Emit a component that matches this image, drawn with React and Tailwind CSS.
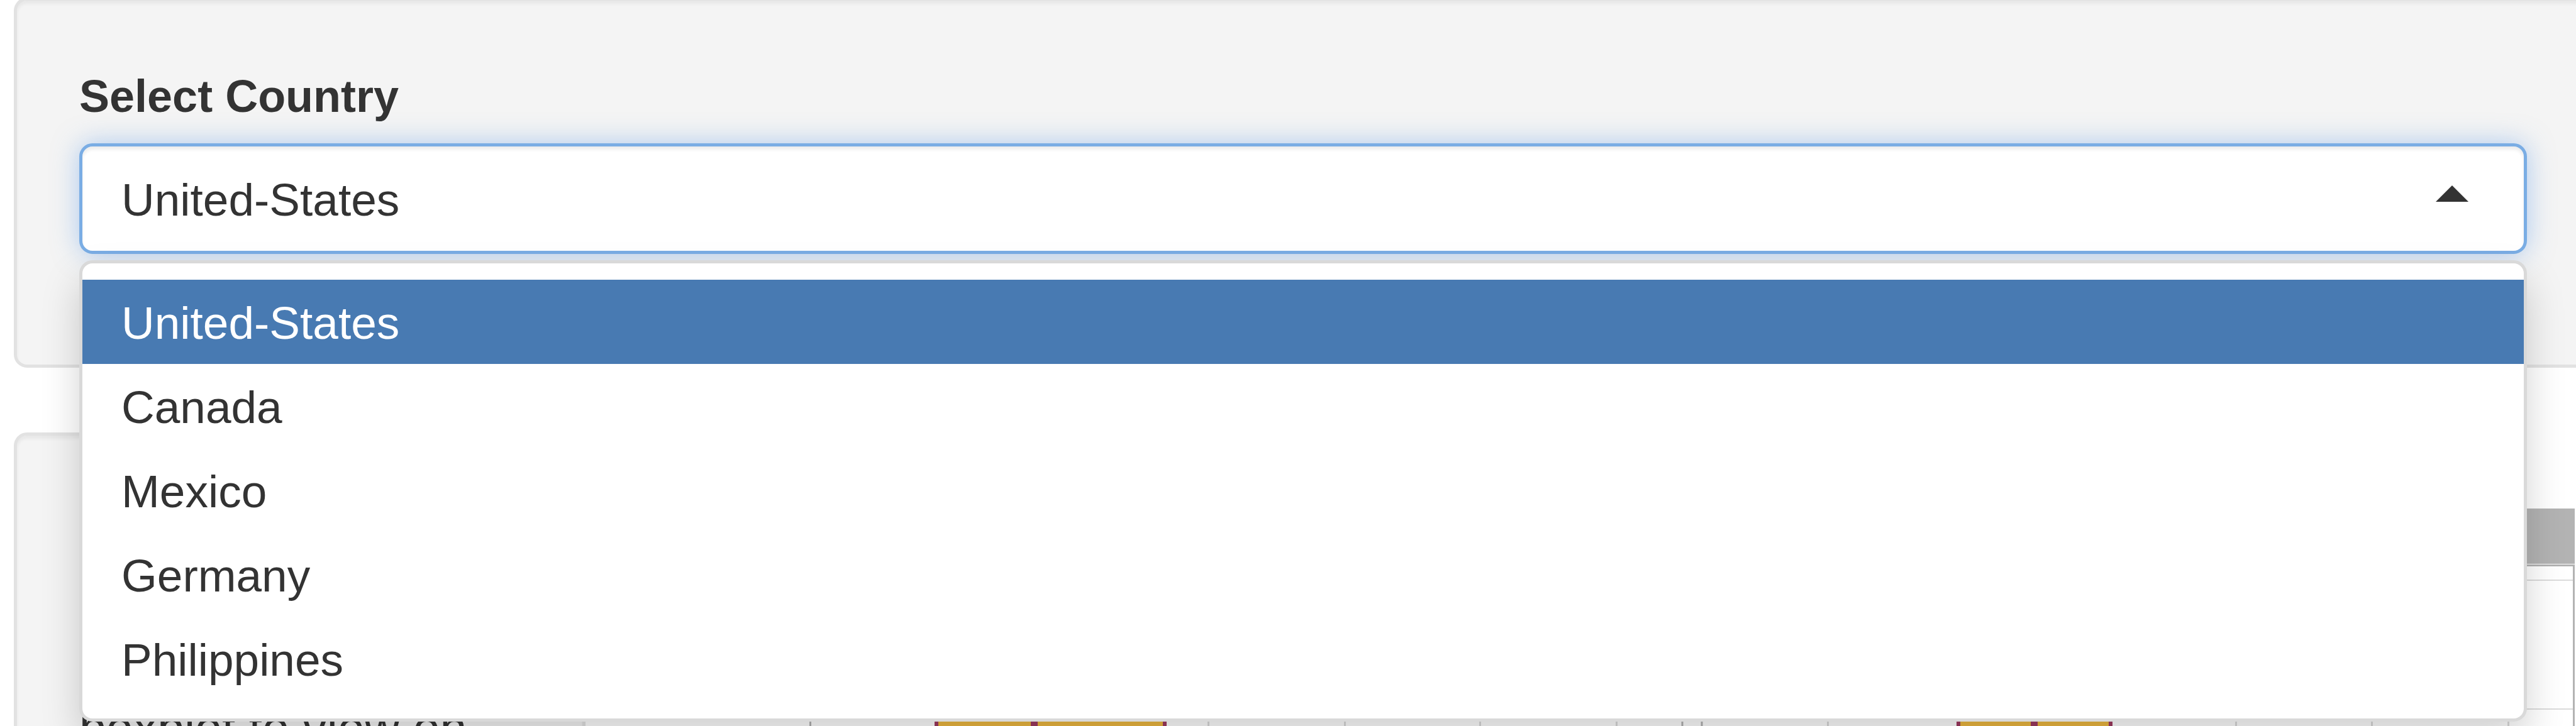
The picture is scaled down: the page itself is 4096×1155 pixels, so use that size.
import React, { useState } from "react";

const countries = ["United-States", "Canada", "Mexico", "Germany", "Philippines"];

function SelectCountry() {
  const [country, setCountry] = useState(countries[0]);
  return (
    <section className="-mr-[26px] -mt-1 rounded-[21px] border-[5px] border-[#e2e2e2] bg-[#f4f4f4] px-[99px] pb-[176px] pt-[101px] shadow-[inset_0_5px_5px_rgba(0,0,0,0.05)]">
      <label htmlFor="country" className="mb-[23px] block text-[72px] font-bold leading-[103px]">
        Select Country
      </label>
      <div className="relative">
        <select
          id="country"
          value={country}
          onChange={(e) => setCountry(e.target.value)}
          className="block h-[176px] w-full appearance-none rounded-[21px] border-[5px] border-[#7aade4] bg-white px-[62px] pt-[3px] text-[73px] leading-[104px] shadow-[inset_0_5px_5px_rgba(0,0,0,0.075),0_0_41px_rgba(102,160,233,0.5)] outline-none"
        >
          {countries.map((name) => (
            <option key={name}>{name}</option>
          ))}
        </select>
        <svg
          aria-hidden="true"
          viewBox="0 0 52 26"
          className="pointer-events-none absolute right-[93px] top-[67px] h-[26px] w-[52px] fill-[#333]"
        >
          <path d="M0 26 26 0l26 26z" />
        </svg>
        <ul
          role="listbox"
          aria-label="Select Country"
          className="absolute inset-x-0 top-full z-10 mt-[10px] rounded-[21px] border-[5px] border-[#d9d9d9] bg-white pb-[28px] pt-[26px] text-[73px] leading-[130px] shadow-[0_31px_62px_rgba(0,0,0,0.175)]"
        >
          {countries.map((name) => (
            <li
              key={name}
              role="option"
              aria-selected={name === country}
              onClick={() => setCountry(name)}
              className="cursor-pointer px-[62px] pt-1 aria-selected:bg-[#487ab2] aria-selected:text-white"
            >
              {name}
            </li>
          ))}
        </ul>
      </div>
    </section>
  );
}

const minorLines = [633, 850, 1065, 1282, 1618, 2267, 2483, 2700];
const rowLines = [113, 318];
const boxes = [
  { left: 202, median: 358, right: 565 },
  { left: 1827, median: 1948, right: 2069 },
];

function BoxPlot() {
  return (
    <svg
      role="img"
      aria-label="Boxplots of the selected country"
      viewBox="0 0 2807 360"
      className="mr-[2px] mt-[121px] h-[360px] w-[2807px] shrink-0"
    >
      <rect x="1417" width="1390" height="88" fill="#b3b3b3" />
      <rect width="1390" height="88" fill="#b3b3b3" />
      <g fill="#dbdbdb">
        {rowLines.map((y) => (
          <rect key={y} y={y} width="2805" height="2" />
        ))}
        {minorLines.map((x) => (
          <rect key={x} x={x} y="90" width="3" height="270" />
        ))}
      </g>
      {boxes.map((b) => (
        <g key={b.left} fill="#9f3b60">
          <rect x={b.left} y="325" width={b.right - b.left} height="35" fill="#eeb941" />
          <rect x={b.left - 3} y="325" width="6" height="35" />
          <rect x={b.median - 6} y="325" width="11" height="35" />
          <rect x={b.right - 3} y="325" width="6" height="35" />
        </g>
      ))}
      <g fill="none" stroke="#b3b3b3" strokeWidth="3">
        <path d="M1.5 360V90.5H1388V360" />
        <path d="M1419 360V90.5H2805.5V360" />
      </g>
    </svg>
  );
}

export default function App() {
  return (
    <main className="h-screen overflow-hidden bg-white pl-[22px] font-['Liberation_Sans',Arial,sans-serif] text-[#333]">
      <SelectCountry />
      <div className="mt-[103px] flex items-start justify-between">
        <section className="w-[909px] shrink-0 rounded-[21px] border-[5px] border-[#e2e2e2] bg-[#f4f4f4] px-[99px] pb-[98px] pt-[414px] shadow-[inset_0_5px_5px_rgba(0,0,0,0.05)]">
          <p className="whitespace-nowrap text-[77px] leading-[103px]">boxplot to view on</p>
        </section>
        <BoxPlot />
      </div>
    </main>
  );
}
